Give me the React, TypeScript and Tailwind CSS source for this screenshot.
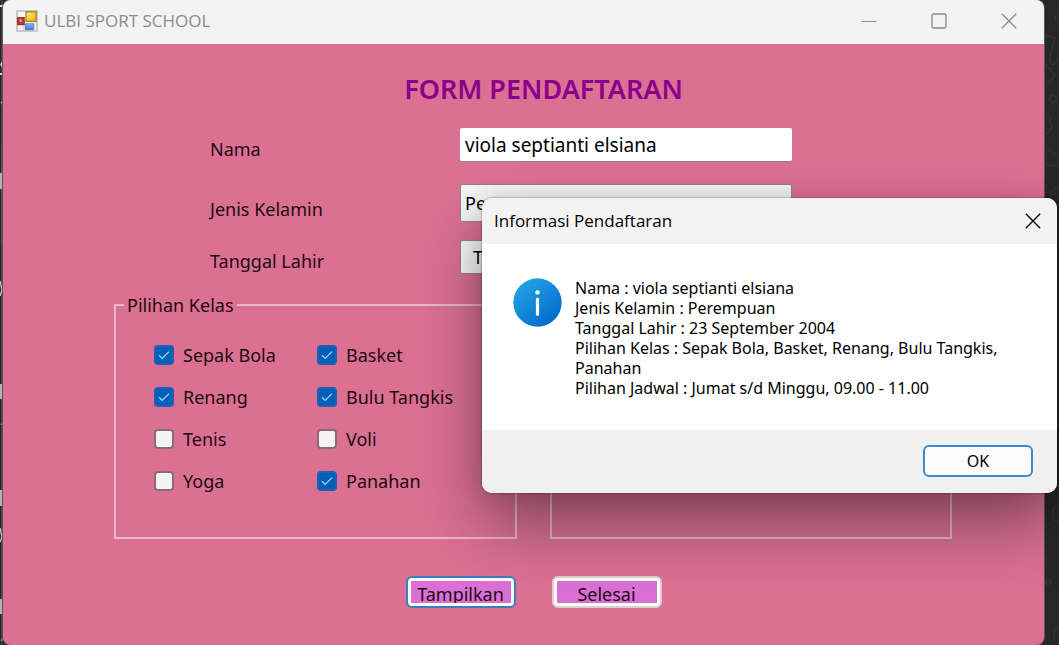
import { useState } from "react";

const classes = [
  { name: "Sepak Bola", checked: true },
  { name: "Basket", checked: true },
  { name: "Renang", checked: true },
  { name: "Bulu Tangkis", checked: true },
  { name: "Tenis", checked: false },
  { name: "Voli", checked: false },
  { name: "Yoga", checked: false },
  { name: "Panahan", checked: true },
];

const messageLines = [
  "Nama : viola septianti elsiana",
  "Jenis Kelamin : Perempuan",
  "Tanggal Lahir : 23 September 2004",
  "Pilihan Kelas : Sepak Bola, Basket, Renang, Bulu Tangkis, Panahan",
  "Pilihan Jadwal : Jumat s/d Minggu, 09.00 - 11.00",
];

function AppIcon() {
  return (
    <svg width="22" height="22" viewBox="0 0 22 22" aria-hidden="true">
      <defs>
        <linearGradient id="yellow" x1="0" y1="0" x2="1" y2="1">
          <stop offset="0" stopColor="#ffec8a" />
          <stop offset="1" stopColor="#f0b400" />
        </linearGradient>
        <linearGradient id="blue" x1="0" y1="0" x2="0" y2="1">
          <stop offset="0" stopColor="#8db8f8" />
          <stop offset="1" stopColor="#3a70d8" />
        </linearGradient>
      </defs>
      <rect x="1" y="1" width="20" height="20" fill="#f4f4f6" stroke="#bfbfc3" strokeWidth="1.6" />
      <path d="M8 14v7M1 15h8M18 14v7" stroke="#c8c8cc" strokeWidth="1.2" />
      <rect x="1.6" y="7.6" width="6.6" height="7" fill="#c23a2c" stroke="#8e2a20" strokeWidth="1" />
      <rect x="3.6" y="9.4" width="2" height="2.6" fill="#f0a090" />
      <rect x="10" y="1.8" width="10" height="9.6" fill="url(#yellow)" stroke="#b08a10" strokeWidth="1.4" />
      <rect x="9.4" y="13.8" width="8" height="6" fill="url(#blue)" stroke="#4a78cc" strokeWidth="0.8" />
    </svg>
  );
}

function CloseIcon() {
  return (
    <svg width="16" height="16" viewBox="0 0 16 16" fill="none" stroke="currentColor" strokeWidth="1.3" aria-hidden="true">
      <path d="M0.8 0.8 15.2 15.2M15.2 0.8 0.8 15.2" />
    </svg>
  );
}

function ClassOption({ name, initial }: { name: string; initial: boolean }) {
  const [checked, setChecked] = useState(initial);
  return (
    <label className="flex h-[42px] items-center gap-[9px]">
      <span className="grid h-5 w-5 shrink-0 place-items-center">
        <input
          type="checkbox"
          checked={checked}
          onChange={(e) => setChecked(e.target.checked)}
          className="col-start-1 row-start-1 h-5 w-5 appearance-none rounded border-2 border-[#8a6a74] bg-[#f3f3f3] checked:border-[#1a62b4] checked:bg-[#005fb8]"
        />
        {checked && (
          <svg className="pointer-events-none col-start-1 row-start-1" width="12" height="10" viewBox="0 0 12 10" fill="none" stroke="#a8d4f4" strokeWidth="1.3" aria-hidden="true">
            <path d="M1 5.2 4.2 8.4 11 1.6" />
          </svg>
        )}
      </span>
      {name}
    </label>
  );
}

function DesktopEdges() {
  return (
    <>
      <svg className="absolute left-0 top-0" width="3" height="645" viewBox="0 0 3 645" fill="none" aria-hidden="true">
        <path d="M2 0v645" stroke="#4b3f44" strokeWidth="2" />
        <path d="M0 6h3M0 74h3" stroke="#d8d8d8" strokeWidth="2" />
        <path d="M3 61 1 64.5 3 68" stroke="#d8d8d8" strokeWidth="1.5" />
        <path d="M1 102 3 105M1 209h2" stroke="#6f9cc0" strokeWidth="1.5" />
        <path d="M2 144v101" stroke="#5b5156" strokeWidth="2" />
        <path d="M1.5 173v16M1.5 384v15M1.5 490v16M1.5 599v15" stroke="#b9b1b4" strokeWidth="3" />
        <path d="M2.5 307v15" stroke="#a09a9c" />
        <path d="M0 281 2 290 0 296M0 528 2 537 0 542" stroke="#d0d0d0" strokeWidth="1.2" />
        <path d="M1 425 3 422M1 641 3 638" stroke="#b0b0b0" />
      </svg>
      <svg className="absolute right-0 top-0" width="14" height="645" viewBox="0 0 14 645" fill="none" stroke="#3a3a3a" aria-hidden="true">
        <circle cx="14" cy="18" r="3.5" />
        <path d="M0 36c7-1 12 3 14 6M9 40c-1 10-6 18-3 24 4 2 6-3 8-6M0 64 12 77M10 74c-2 5-5 9-9 9" />
        <circle cx="8" cy="99" r="3.5" />
        <path d="M1 114c5 2 6 5 3 8 4 4 3 8-3 12M1 153c4-5 7-3 8 1l5 1M1 164c5 4 7-3 13 6M5 196c1-5 5-8 9-9" />
        <path d="M14 507c-6-1-7 4-5 7-3 4 0 8 5 7" />
        <circle cx="3" cy="582" r="2.5" />
        <path d="M14 627c-5 2-6 7-4 12" />
      </svg>
    </>
  );
}

function InfoDialog({ onClose }: { onClose: () => void }) {
  return (
    <section
      role="dialog"
      aria-labelledby="dialog-title"
      className="absolute right-0.5 top-[198px] w-[575px] overflow-hidden rounded-[10px] bg-white text-black shadow-[0_0_2px_rgba(0,0,0,0.6),0_2px_24px_rgba(0,0,0,0.12),0_32px_64px_rgba(0,0,0,0.4)]"
    >
      <header className="flex h-[46px] items-center justify-between bg-[#f3f3f3] pl-3 pr-4">
        <h2 id="dialog-title" className="font-['Open_Sans','Noto_Sans',sans-serif] text-[17px]">Informasi Pendaftaran</h2>
        <button type="button" aria-label="Tutup" onClick={onClose}>
          <CloseIcon />
        </button>
      </header>
      <div className="flex h-[186px] gap-[13px] pl-[31px] pr-8 pt-[34px]">
        <svg className="shrink-0" width="49" height="49" viewBox="0 0 49 49" aria-hidden="true">
          <defs>
            <linearGradient id="info" x1="0.1" y1="0.1" x2="0.8" y2="1">
              <stop offset="0" stopColor="#24a4e4" />
              <stop offset="1" stopColor="#0067cc" />
            </linearGradient>
          </defs>
          <circle cx="24.5" cy="24.5" r="24.2" fill="url(#info)" />
          <circle cx="24.5" cy="14.4" r="2.2" fill="#fff" />
          <path d="M24.5 21v15.2" stroke="#fff" strokeWidth="3.2" strokeLinecap="round" />
        </svg>
        <div className="text-base leading-5">
          {messageLines.map((line) => (
            <p key={line}>{line}</p>
          ))}
        </div>
      </div>
      <footer className="flex h-[63px] items-center justify-end bg-[#f0f0f0] pb-0.5 pr-6">
        <button type="button" onClick={onClose} className="h-8 w-[110px] rounded-md border-2 border-[#3c8bd0] bg-[#fdfdfd] text-base leading-5">
          OK
        </button>
      </footer>
    </section>
  );
}

export default function App() {
  const [open, setOpen] = useState(true);
  const [name, setName] = useState("viola septianti elsiana");
  const [date, setDate] = useState("Thursday , 23 September 2004");

  return (
    <div className="relative flex min-h-screen overflow-hidden bg-[#272727] pl-[3px] pr-[15px] font-['Noto_Sans',sans-serif] text-lg leading-6 text-[#1c0a12]">
      <DesktopEdges />
      <main className="relative flex flex-1 flex-col overflow-hidden rounded-lg bg-[#db7093] shadow-[0_0_0_1px_#5a5256]">
        <header className="flex h-11 items-center justify-between bg-[#f3f3f3] pb-[3px] pl-[13px] pr-[27px] text-[#8c8c8c]">
          <div className="flex items-center gap-1.5">
            <AppIcon />
            <h1 className="font-['Open_Sans','Noto_Sans',sans-serif] text-[17px]">ULBI SPORT SCHOOL</h1>
          </div>
          <div className="flex items-center gap-[54px]">
            <button type="button" aria-label="Kecilkan">
              <svg width="16" height="16" viewBox="0 0 16 16" stroke="currentColor" aria-hidden="true"><path d="M0.5 8.5h15" /></svg>
            </button>
            <button type="button" aria-label="Besarkan">
              <svg width="16" height="16" viewBox="0 0 16 16" fill="none" stroke="currentColor" strokeWidth="1.3" aria-hidden="true"><rect x="1" y="1" width="14" height="14" rx="1.5" /></svg>
            </button>
            <button type="button" aria-label="Tutup jendela"><CloseIcon /></button>
          </div>
        </header>

        <form className="flex flex-col pl-28 pr-[92px]" onSubmit={(e) => { e.preventDefault(); setOpen(true); }}>
          <h2 className="pb-px pl-5 pt-[27px] text-center text-[27px] font-semibold leading-9 text-[#8b008b]">FORM PENDAFTARAN</h2>

          <div className="grid grid-cols-[250px_1fr] pl-[95px] pr-40 pt-5">
            <label htmlFor="nama" className="pt-[9px]">Nama</label>
            <input
              id="nama"
              value={name}
              onChange={(e) => setName(e.target.value)}
              className="mb-[22px] h-[34px] w-full rounded-xs border-b border-[#8d8488] bg-white px-[5px] text-[19px] text-black outline-none"
            />
            <label htmlFor="kelamin" className="pt-[13px]">Jenis Kelamin</label>
            <select id="kelamin" defaultValue="Perempuan" className="mb-[18px] h-[38px] w-full appearance-none rounded-xs border border-[#8d8488] bg-[#f4f4f4] px-1 text-black">
              <option>Laki-laki</option>
              <option>Perempuan</option>
            </select>
            <label htmlFor="tanggal" className="pt-[9px]">Tanggal Lahir</label>
            <input
              id="tanggal"
              value={date}
              onChange={(e) => setDate(e.target.value)}
              className="h-[34px] w-full rounded-xs border border-[#8d8488] bg-[#f8f8f8] px-3 text-black outline-none"
            />
          </div>

          <div className="-ml-px mt-[19px] grid grid-cols-2 gap-[33px]">
            <fieldset className="h-[246px] border-2 border-[#eab8c8] pl-[38px]">
              <legend className="-ml-[30px] px-[3px]">Pilihan Kelas</legend>
              <div className="grid grid-cols-[163px_1fr] pt-[17px]">
                {classes.map((c) => (
                  <ClassOption key={c.name} name={c.name} initial={c.checked} />
                ))}
              </div>
            </fieldset>
            <fieldset aria-label="Pilihan Jadwal" className="mt-3 h-[234px] border-2 border-[#eab8c8]" />
          </div>

          <div className="flex justify-center gap-9 pt-[37px]">
            <button type="submit" className="h-8 w-[110px] rounded-md border-2 border-[#3c7cc4] bg-white p-[3px]">
              <span className="block h-[22px] overflow-hidden bg-[#da70d6] pt-px">Tampilkan</span>
            </button>
            <button type="button" className="h-8 w-[110px] rounded-md border-2 border-[#dccfd2] bg-white p-[3px]">
              <span className="block h-[22px] overflow-hidden bg-[#da70d6] pt-px">Selesai</span>
            </button>
          </div>
        </form>
      </main>
      {open && <InfoDialog onClose={() => setOpen(false)} />}
    </div>
  );
}
